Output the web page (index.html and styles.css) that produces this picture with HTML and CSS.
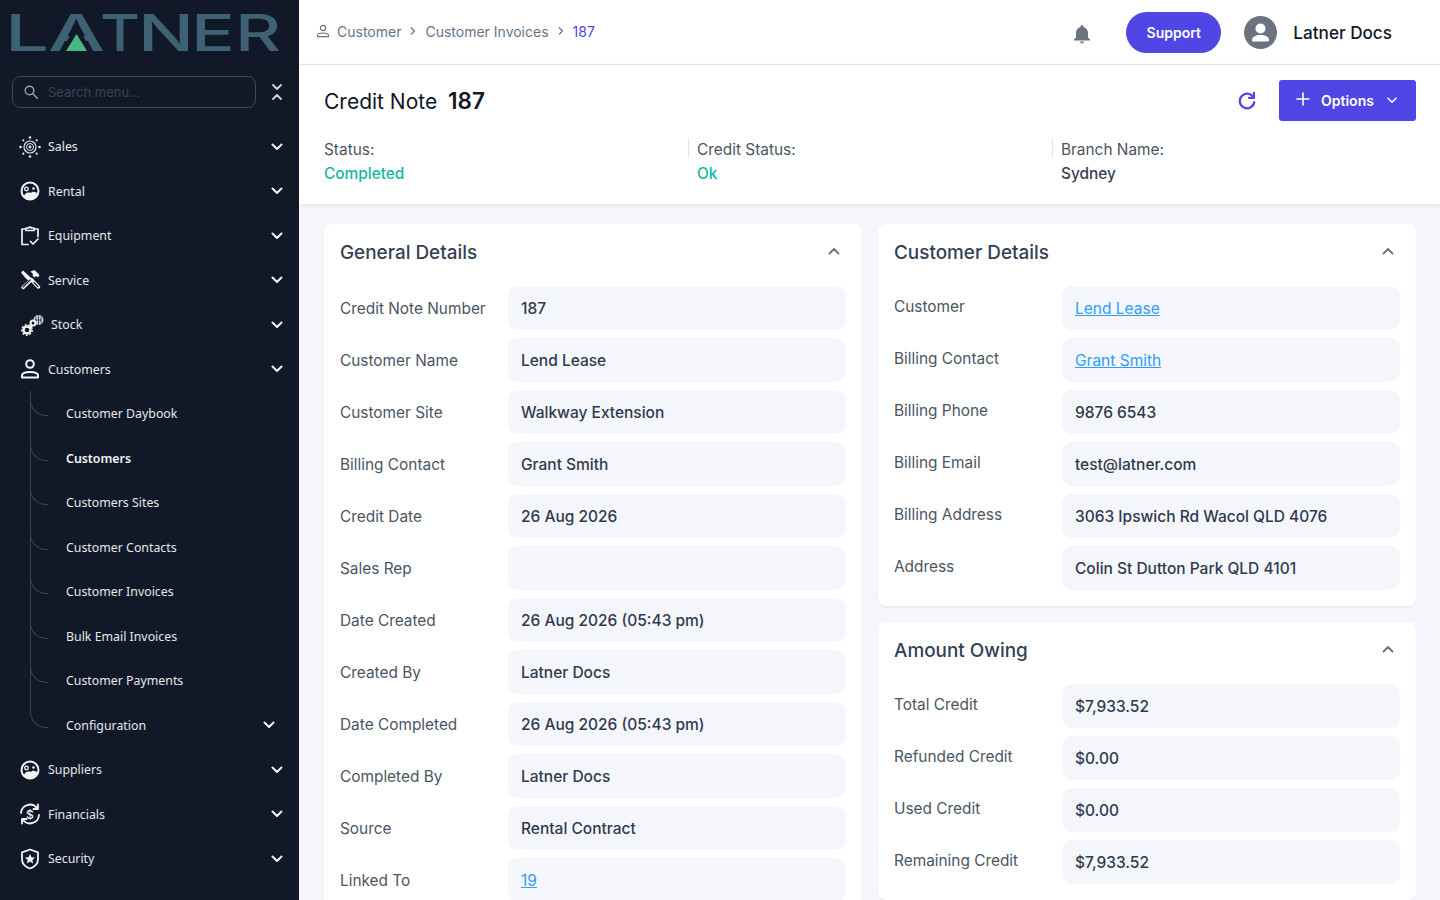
FILE: index.html
```html
<!DOCTYPE html>
<html lang="en">
<head>
    <meta charset="UTF-8">
    <meta name="viewport" content="width=device-width, initial-scale=1.0">
    <title>Credit Note 187</title>
    <link rel="stylesheet" href="styles.css">
</head>
<body>
    <aside class="sidebar">
        <div class="logo">
            <svg width="299" height="64" viewBox="0 0 299 64">
                <g class="logo-text">
                    <text x="5" y="51" textLength="44" lengthAdjust="spacingAndGlyphs">L</text>
                    <text x="48" y="51" textLength="57" lengthAdjust="spacingAndGlyphs">A</text>
                    <text x="100" y="51" textLength="40" lengthAdjust="spacingAndGlyphs">T</text>
                    <text x="138" y="51" textLength="56" lengthAdjust="spacingAndGlyphs">N</text>
                    <text x="191" y="51" textLength="44" lengthAdjust="spacingAndGlyphs">E</text>
                    <text x="235" y="51" textLength="46" lengthAdjust="spacingAndGlyphs">R</text>
                </g>
                <polygon points="60,52 93,52 76.500,26" fill="#111928"/>
                <polygon points="66,51 87,51 76.500,34" fill="#47b881"/>
            </svg>
        </div>

        <div class="search-row">
            <div class="search-box">
                <svg class="search-icon" width="14" height="14" viewBox="0 0 14 14" fill="none" stroke="#9ca3af" stroke-width="1.400" stroke-linecap="round"><circle cx="5.500" cy="5.500" r="4.300"/><path d="M8.800 8.800l4.500 4.500"/></svg>
                <span>Search menu...</span>
            </div>
            <svg width="10" height="16" viewBox="0 0 10 16" fill="none" stroke="#d1d5db" stroke-width="1.800" stroke-linecap="round" stroke-linejoin="round"><path d="M1 1l4 4 4-4"/><path d="M1 15l4-4 4 4"/></svg>
        </div>

        <nav class="menu">
            <a class="menu-item">
                <svg class="menu-icon" viewBox="0 0 22 22" fill="none" stroke="#e5e7eb"><g fill="#e5e7eb" stroke="none"><circle cx="11" cy="1.500" r="1.300"/><circle cx="11" cy="20.500" r="1.300"/><circle cx="1.500" cy="11" r="1.300"/><circle cx="20.500" cy="11" r="1.300"/><circle cx="4.300" cy="4.300" r="1.100"/><circle cx="17.700" cy="4.300" r="1.100"/><circle cx="4.300" cy="17.700" r="1.100"/><circle cx="17.700" cy="17.700" r="1.100"/></g><circle cx="11" cy="11" r="6" stroke-width="1.200"/><circle cx="11" cy="11" r="3.500" stroke-width="1"/><circle cx="11" cy="11" r="1.400" fill="#e5e7eb" stroke="none"/></svg>
                <span>Sales</span>
                <svg class="chevron" viewBox="0 0 12 8"><path d="M1.500 1.500L6 6l4.500-4.500"/></svg>
            </a>
            <a class="menu-item">
                <svg class="menu-icon" viewBox="0 0 22 22" fill="none" stroke="#f3f4f6" stroke-width="2"><circle cx="11" cy="11" r="8.500"/><circle cx="7.500" cy="9" r="1.800" stroke-width="1.300"/><circle cx="14.500" cy="8.500" r="1.300" fill="#f3f4f6" stroke="none"/><path d="M5 17c0-3 2-4.500 5-4.500 1 0 2 .5 2.500 0s1-1 3-.5l3 1c-.5 3-4 7-9 6.500-2 0-3.500-1-4.500-2.500z" fill="#f3f4f6" stroke="none"/></svg>
                <span>Rental</span>
                <svg class="chevron" viewBox="0 0 12 8"><path d="M1.500 1.500L6 6l4.500-4.500"/></svg>
            </a>
            <a class="menu-item">
                <svg class="menu-icon" viewBox="0 0 22 22" fill="none" stroke="#f3f4f6" stroke-width="1.700" stroke-linecap="round" stroke-linejoin="round"><path d="M6 4H3v15.500h6"/><path d="M15.500 4h3.500v7.500"/><path d="M7 5.500V3h2.500a1.700 1.700 0 0 1 3 0H15v2.500z"/><path d="M11.500 16.500l2.500 2.500 5-5"/></svg>
                <span>Equipment</span>
                <svg class="chevron" viewBox="0 0 12 8"><path d="M1.500 1.500L6 6l4.500-4.500"/></svg>
            </a>
            <a class="menu-item">
                <svg class="menu-icon" viewBox="0 0 22 22" fill="#f3f4f6" stroke="none"><path d="M2 3.500L4 1.500l5 4.500 1 1 2.500 2.500-2.500 2.500L7 9.500 6 8.500z"/><path d="M11.500 2.500l4-1.500 5 5-1.500 2.500-2-1.500-1.500 1.500-2-2L14 5z"/><path d="M12.500 8.500l2.500 2-10 9.500c-1 1-3.500-1-2.500-2.500z"/><path d="M12 13l2.500-2.500 6.500 6.500c1 1.500-1 3.500-2.500 2.500z"/><path d="M4 18l7-7M15 13.500l4 4" stroke="#111928" stroke-width="1.100" stroke-linecap="round"/></svg>
                <span>Service</span>
                <svg class="chevron" viewBox="0 0 12 8"><path d="M1.500 1.500L6 6l4.500-4.500"/></svg>
            </a>
            <a class="menu-item">
                <svg class="menu-icon menu-icon-wide" viewBox="0 0 25 22" fill="none"><circle cx="19.500" cy="6" r="5" fill="#d1d5db"/><path d="M16 6h7M19.500 1v10M17 2.500v7M22 2.500v7" stroke="#111928" stroke-width=".7"/><circle cx="8" cy="16" r="3.500" stroke="#f3f4f6" stroke-width="2.500"/><circle cx="8" cy="16" r="5.200" stroke="#f3f4f6" stroke-width="1.500" stroke-dasharray="2 1.600"/><circle cx="14" cy="9" r="2.500" stroke="#f3f4f6" stroke-width="2"/><path d="M13 12l-2 2" stroke="#f3f4f6" stroke-width="2"/></svg>
                <span>Stock</span>
                <svg class="chevron" viewBox="0 0 12 8"><path d="M1.500 1.500L6 6l4.500-4.500"/></svg>
            </a>
            <a class="menu-item">
                <svg class="menu-icon" viewBox="0 0 22 22" fill="none" stroke="#f3f4f6" stroke-width="2" stroke-linejoin="round"><circle cx="11" cy="6" r="3.800"/><path d="M3 19.500v-2c0-2 2.500-3.500 8-3.500s8 1.500 8 3.500v2z"/></svg>
                <span>Customers</span>
                <svg class="chevron" viewBox="0 0 12 8"><path d="M1.500 1.500L6 6l4.500-4.500"/></svg>
            </a>
            <div class="submenu">
                <a class="sub-item">Customer Daybook</a>
                <a class="sub-item sub-item-active">Customers</a>
                <a class="sub-item">Customers Sites</a>
                <a class="sub-item">Customer Contacts</a>
                <a class="sub-item">Customer Invoices</a>
                <a class="sub-item">Bulk Email Invoices</a>
                <a class="sub-item">Customer Payments</a>
                <a class="sub-item">Configuration
                    <svg class="chevron chevron-sub" viewBox="0 0 12 8"><path d="M1.500 1.500L6 6l4.500-4.500"/></svg>
                </a>
            </div>
            <a class="menu-item">
                <svg class="menu-icon" viewBox="0 0 22 22" fill="none" stroke="#f3f4f6" stroke-width="2"><circle cx="11" cy="11" r="8.500"/><circle cx="7.500" cy="9" r="1.800" stroke-width="1.300"/><circle cx="14.500" cy="8.500" r="1.300" fill="#f3f4f6" stroke="none"/><path d="M5 17c0-3 2-4.500 5-4.500 1 0 2 .5 2.500 0s1-1 3-.5l3 1c-.5 3-4 7-9 6.500-2 0-3.500-1-4.500-2.500z" fill="#f3f4f6" stroke="none"/></svg>
                <span>Suppliers</span>
                <svg class="chevron" viewBox="0 0 12 8"><path d="M1.500 1.500L6 6l4.500-4.500"/></svg>
            </a>
            <a class="menu-item">
                <svg class="menu-icon" viewBox="0 0 22 22" fill="none" stroke="#f3f4f6" stroke-width="1.800" stroke-linecap="round" stroke-linejoin="round"><path d="M2 10a9 9 0 0 1 16-5"/><path d="M20 12a9 9 0 0 1-16 5"/><path d="M19 1.500V6h-4.500"/><path d="M3 20.500V16h4.500"/><text class="money-sign" x="11" y="15.500" text-anchor="middle">$</text></svg>
                <span>Financials</span>
                <svg class="chevron" viewBox="0 0 12 8"><path d="M1.500 1.500L6 6l4.500-4.500"/></svg>
            </a>
            <a class="menu-item">
                <svg class="menu-icon" viewBox="0 0 22 22" fill="none" stroke="#f3f4f6" stroke-width="1.800" stroke-linejoin="round"><path d="M11 1.500l8 2.800v7c0 4.500-3.500 7.700-8 9.200-4.500-1.500-8-4.700-8-9.200v-7z"/><path d="M11 6l1.500 3.200 3.500.4-2.600 2.300.7 3.500-3.100-1.800-3.100 1.800.7-3.500L6 9.600l3.500-.4z" fill="#f3f4f6" stroke="none"/></svg>
                <span>Security</span>
                <svg class="chevron" viewBox="0 0 12 8"><path d="M1.500 1.500L6 6l4.500-4.500"/></svg>
            </a>
        </nav>
    </aside>

    <div class="main">
        <header class="topbar">
            <div class="breadcrumb">
                <svg width="14" height="14" viewBox="0 0 14 14" fill="none" stroke="#64748b" stroke-width="1.200" stroke-linejoin="round"><circle cx="7" cy="4" r="2.600"/><path d="M1.500 12.700v-1.200c0-1.500 2-2.500 5.500-2.500s5.500 1 5.500 2.500v1.200z"/></svg>
                <span>Customer</span>
                <svg class="crumb-sep" viewBox="0 0 6 10"><path d="M1 1.500L4.500 5 1 8.500"/></svg>
                <span>Customer Invoices</span>
                <svg class="crumb-sep" viewBox="0 0 6 10"><path d="M1 1.500L4.500 5 1 8.500"/></svg>
                <span class="crumb-current">187</span>
            </div>
            <div class="topbar-right">
                <svg class="bell" width="18" height="20" viewBox="0 0 18 20" fill="#6b7280"><path d="M9 1a1.500 1.500 0 0 0-1.500 1.500v.6C4.800 3.800 3 6.100 3 9v4.500L1 15.500V16.500h16v-1l-2-2V9c0-2.900-1.800-5.200-4.500-5.900v-.6A1.500 1.500 0 0 0 9 1z"/><path d="M7 17.500a2 2 0 0 0 4 0z"/></svg>
                <a class="support-btn">Support</a>
                <svg class="avatar" width="33" height="33" viewBox="0 0 33 33"><circle cx="16.500" cy="16.500" r="16.500" fill="#6b7280"/><circle cx="16.500" cy="12.500" r="5" fill="#fff"/><path d="M8 24c0-3 3.500-5 8.500-5s8.500 2 8.500 5c0 1-.5 1.500-1.500 1.500h-14C8.500 25.500 8 25 8 24z" fill="#fff"/></svg>
                <span class="user-name">Latner Docs</span>
            </div>
        </header>

        <section class="page-head">
            <div class="title-row">
                <h1>Credit Note <b>187</b></h1>
                <div class="title-actions">
                    <svg width="20" height="20" viewBox="0 0 20 20" fill="none" stroke="#4f46e5" stroke-width="2.200" stroke-linecap="round" stroke-linejoin="round"><path d="M16.500 6.500A7.300 7.300 0 1 0 17.300 11"/><path d="M17 1.800v5h-5"/></svg>
                    <a class="options-btn">
                        <svg class="plus-icon" width="14" height="14" viewBox="0 0 14 14" fill="none" stroke="#fff" stroke-width="1.600" stroke-linecap="round"><path d="M7 1v12M1 7h12"/></svg>
                        <span>Options</span>
                        <svg width="10" height="7" viewBox="0 0 10 7" fill="none" stroke="#fff" stroke-width="1.500" stroke-linecap="round" stroke-linejoin="round"><path d="M1 1.200l4 4 4-4"/></svg>
                    </a>
                </div>
            </div>
            <div class="stats">
                <div class="stat">
                    <div class="stat-label">Status:</div>
                    <div class="stat-value stat-good">Completed</div>
                </div>
                <div class="stat">
                    <div class="stat-label">Credit Status:</div>
                    <div class="stat-value stat-good">Ok</div>
                </div>
                <div class="stat">
                    <div class="stat-label">Branch Name:</div>
                    <div class="stat-value">Sydney</div>
                </div>
            </div>
        </section>

        <div class="content">
            <div class="column">
                <section class="card">
                    <div class="card-head">
                        <h2>General Details</h2>
                        <svg class="card-toggle" viewBox="0 0 12 8"><path d="M1.500 6.500L6 2l4.500 4.500"/></svg>
                    </div>
                    <div class="fields">
                        <div class="field"><label>Credit Note Number</label><div class="value">187</div></div>
                        <div class="field"><label>Customer Name</label><div class="value">Lend Lease</div></div>
                        <div class="field"><label>Customer Site</label><div class="value">Walkway Extension</div></div>
                        <div class="field"><label>Billing Contact</label><div class="value">Grant Smith</div></div>
                        <div class="field"><label>Credit Date</label><div class="value">26 Aug 2026</div></div>
                        <div class="field"><label>Sales Rep</label><div class="value"></div></div>
                        <div class="field"><label>Date Created</label><div class="value">26 Aug 2026 (05:43 pm)</div></div>
                        <div class="field"><label>Created By</label><div class="value">Latner Docs</div></div>
                        <div class="field"><label>Date Completed</label><div class="value">26 Aug 2026 (05:43 pm)</div></div>
                        <div class="field"><label>Completed By</label><div class="value">Latner Docs</div></div>
                        <div class="field"><label>Source</label><div class="value">Rental Contract</div></div>
                        <div class="field"><label>Linked To</label><div class="value"><a class="link">19</a></div></div>
                    </div>
                </section>
            </div>
            <div class="column">
                <section class="card card-side">
                    <div class="card-head">
                        <h2>Customer Details</h2>
                        <svg class="card-toggle" viewBox="0 0 12 8"><path d="M1.500 6.500L6 2l4.500 4.500"/></svg>
                    </div>
                    <div class="fields">
                        <div class="field"><label>Customer</label><div class="value"><a class="link">Lend Lease</a></div></div>
                        <div class="field"><label>Billing Contact</label><div class="value"><a class="link">Grant Smith</a></div></div>
                        <div class="field"><label>Billing Phone</label><div class="value">9876 6543</div></div>
                        <div class="field"><label>Billing Email</label><div class="value">test@latner.com</div></div>
                        <div class="field"><label>Billing Address</label><div class="value">3063 Ipswich Rd Wacol QLD 4076</div></div>
                        <div class="field"><label>Address</label><div class="value">Colin St Dutton Park QLD 4101</div></div>
                    </div>
                </section>
                <section class="card card-side">
                    <div class="card-head">
                        <h2>Amount Owing</h2>
                        <svg class="card-toggle" viewBox="0 0 12 8"><path d="M1.500 6.500L6 2l4.500 4.500"/></svg>
                    </div>
                    <div class="fields">
                        <div class="field"><label>Total Credit</label><div class="value">$7,933.52</div></div>
                        <div class="field"><label>Refunded Credit</label><div class="value">$0.00</div></div>
                        <div class="field"><label>Used Credit</label><div class="value">$0.00</div></div>
                        <div class="field"><label>Remaining Credit</label><div class="value">$7,933.52</div></div>
                    </div>
                </section>
            </div>
        </div>
    </div>
</body>
</html>
```

FILE: styles.css
```css
:root {
    --primary: #4f46e5;
    --sidebar: #111928;
    --page: #f4f6fb;
    --text: #111827;
    --label: #4b5563;
    --value: #2f3a4f;
    --teal: #14b8a6;
    --link: #2f9ef5;
}
* { margin: 0; padding: 0; box-sizing: border-box; }
html, body { height: 100%; overflow: hidden; }
body { display: flex; font-family: 'Inter', sans-serif; background: var(--page); color: var(--text); }

/* sidebar */
.sidebar { width: 299px; flex: none; height: 100vh; background: var(--sidebar); font-family: 'Noto Sans', sans-serif; color: #e5e7eb; }
.logo { height: 64px; }
.logo svg { display: block; }
.logo-text { font-family: 'Inter', sans-serif; font-size: 51px; font-weight: 500; fill: #3d6273; }
.search-row { display: flex; align-items: center; justify-content: space-between; margin-top: 12px; padding: 0 17px 0 12px; }
.search-box {
    width: 244px; height: 32px; display: flex; align-items: center; gap: 10px;
    padding-left: 11px; border: 1px solid #3f4654; border-radius: 8px;
    font-family: 'Inter', sans-serif; font-size: 13px; color: #374151;
}
.search-icon { flex: none; }
.menu { margin-top: 16.250px; }
.menu-item { height: 44.5px; display: flex; align-items: center; padding: 0 16px 0 19px; font-size: 12.350px; }
.menu-icon { width: 22px; height: 22px; flex: none; margin-right: 7px; }
.menu-icon-wide { width: 25px; }
.menu-item span { flex: 1; }
.chevron { width: 12px; height: 8px; flex: none; fill: none; stroke: #f3f4f6; stroke-width: 2; stroke-linecap: round; stroke-linejoin: round; }
.money-sign { font-family: 'Inter', sans-serif; font-size: 12px; font-weight: 500; fill: #f3f4f6; stroke: none; }
.submenu { position: relative; }
.submenu::before { content: ""; position: absolute; left: 30px; top: 0; height: 320px; border-left: 1px solid #374151; }
.sub-item { position: relative; height: 44.5px; display: flex; align-items: center; justify-content: space-between; padding: 0 24px 0 66px; font-size: 12.350px; }
.sub-item::before {
    content: ""; position: absolute; left: 30px; top: 8px; width: 17px; height: 16px;
    border-left: 1px solid #374151; border-bottom: 1px solid #374151; border-bottom-left-radius: 16px;
}
.sub-item-active { font-weight: 600; color: #f3f4f6; }

/* top bar */
.main { flex: 1; min-width: 0; height: 100vh; display: flex; flex-direction: column; }
.topbar { height: 65px; flex: none; display: flex; align-items: center; justify-content: space-between; padding: 0 48px 0 17px; background: #fff; border-bottom: 1px solid #e3e6f0; }
.breadcrumb { display: flex; align-items: center; gap: 7px; padding-bottom: 2px; font-size: 14px; color: #64748b; }
.crumb-sep { width: 6px; height: 10px; margin: 0 2px; fill: none; stroke: #64748b; stroke-width: 1.200; }
.crumb-current { color: var(--primary); }
.topbar-right { display: flex; align-items: center; }
.bell { margin: 3px 35px 0 0; }
.support-btn { width: 95px; height: 41px; display: flex; align-items: center; justify-content: center; border-radius: 21px; background: var(--primary); color: #fff; font-size: 14px; font-weight: 600; }
.avatar { margin: 0 16px 0 23px; }
.user-name { font-size: 17.150px; font-weight: 500; }

/* page head */
.page-head { flex: none; height: 139px; padding: 15px 24px 0 25px; background: #fff; box-shadow: 0 2px 6px rgba(17, 24, 39, 0.07); position: relative; }
.title-row { display: flex; align-items: center; justify-content: space-between; height: 41px; }
h1 { font-size: 21px; font-weight: 400; }
h1 b { font-size: 22.500px; font-weight: 600; margin-left: 5px; }
.title-actions { display: flex; align-items: center; gap: 22px; }
.options-btn { width: 137px; height: 41px; display: flex; align-items: center; gap: 11px; padding-left: 17px; border-radius: 3px; background: var(--primary); color: #fff; font-size: 14px; font-weight: 600; }
.options-btn span { margin-right: 2px; }
.plus-icon { margin-bottom: 3px; }
.stats { display: grid; grid-template-columns: repeat(3, 364px); margin-top: 17px; }
.stat { position: relative; padding-left: 9px; font-size: 15.400px; line-height: 24px; }
.stat:first-child { padding-left: 0; }
.stat + .stat::before { content: ""; position: absolute; left: 0; top: 0; height: 20px; border-left: 1px solid #e3e6f0; }
.stat-label { color: var(--label); }
.stat-value { color: #374151; font-weight: 500; }
.stat-good { color: var(--teal); font-weight: 500; }

/* cards */
.content { flex: 1; min-height: 0; display: grid; grid-template-columns: 538px 538px; gap: 16px; padding: 20px 24px 0 25px; }
.column { display: flex; flex-direction: column; gap: 16px; }
.card { background: #fff; border-radius: 8px; padding: 0 16px 16px; box-shadow: 0 1px 2px rgba(17, 24, 39, 0.06); }
.card-head { height: 62px; display: flex; align-items: center; justify-content: space-between; padding: 0 6px 6px 0; }
h2 { font-size: 18.900px; font-weight: 500; color: #334155; }
.card-toggle { width: 12px; height: 8px; margin-top: -3px; fill: none; stroke: #6b7280; stroke-width: 1.800; stroke-linecap: round; stroke-linejoin: round; }
.fields { display: flex; flex-direction: column; gap: 8px; }
.field { display: grid; grid-template-columns: 168px 1fr; align-items: center; font-size: 15.400px; }
.field label { color: var(--label); }
.card-side .field label { padding-bottom: 4px; }
.value { height: 44px; display: flex; align-items: center; padding: 0 13px; border-radius: 10px; background: var(--page); color: var(--value); font-size: 15.500px; font-weight: 500; }
.link { color: var(--link); font-weight: 400; text-decoration: underline; }
```
